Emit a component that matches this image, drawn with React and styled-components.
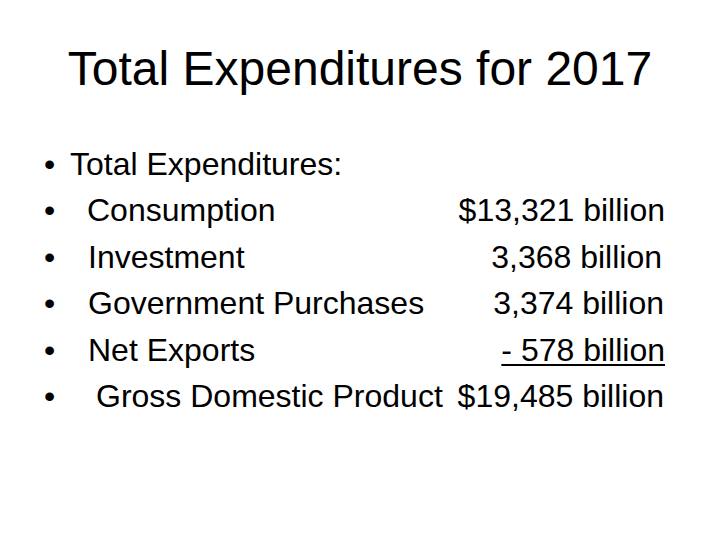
import React from 'react';
import styled, { createGlobalStyle } from 'styled-components';

const GlobalStyle = createGlobalStyle`
  html, body {
    margin: 0;
    padding: 0;
    background: #ffffff;
  }
`;

const Slide = styled.div`
  width: 720px;
  height: 540px;
  background-color: #ffffff;
  color: #000000;
  font-family: "Liberation Sans", Arial, sans-serif;
  padding-top: 41px;
  box-sizing: border-box;
  overflow: hidden;
`;

const Title = styled.h1`
  margin: 0;
  font-size: 48px;
  font-weight: normal;
  line-height: 55px;
  text-align: center;
`;

const List = styled.ul`
  list-style: none;
  margin: 45px 55px 0 44px;
  padding: 0;
`;

const Row = styled.li`
  display: grid;
  grid-template-columns: 26px 1fr auto;
  font-size: 32px;
  line-height: 46.4px;
  white-space: nowrap;
`;

const Bullet = styled.span`
  display: block;
`;

const Label = styled.span`
  padding-left: ${(p) => p.$indent || 0}px;
`;

const Value = styled.span`
  text-align: right;
  padding-right: ${(p) => p.$nudge || 0}px;
  text-decoration: ${(p) => (p.$underline ? 'underline' : 'none')};
  text-decoration-thickness: 2px;
  text-underline-offset: 3px;
`;

const rows = [
  { label: 'Total Expenditures:', indent: 0 },
  { label: 'Consumption', indent: 17, value: '$13,321 billion' },
  { label: 'Investment', indent: 18, value: '3,368 billion', nudge: 3 },
  { label: 'Government Purchases', indent: 18, value: '3,374 billion', nudge: 1 },
  { label: 'Net Exports', indent: 18, value: '- 578 billion', underline: true },
  { label: 'Gross Domestic Product', indent: 26, value: '$19,485 billion', nudge: 1 },
];

const App = () => {
  return (
    <>
      <GlobalStyle />
      <Slide>
        <Title>Total Expenditures for 2017</Title>
        <List>
          {rows.map((row) => (
            <Row key={row.label}>
              <Bullet>•</Bullet>
              <Label $indent={row.indent}>{row.label}</Label>
              {row.value && (
                <Value $nudge={row.nudge} $underline={row.underline}>
                  {row.value}
                </Value>
              )}
            </Row>
          ))}
        </List>
      </Slide>
    </>
  );
};

export default App;
